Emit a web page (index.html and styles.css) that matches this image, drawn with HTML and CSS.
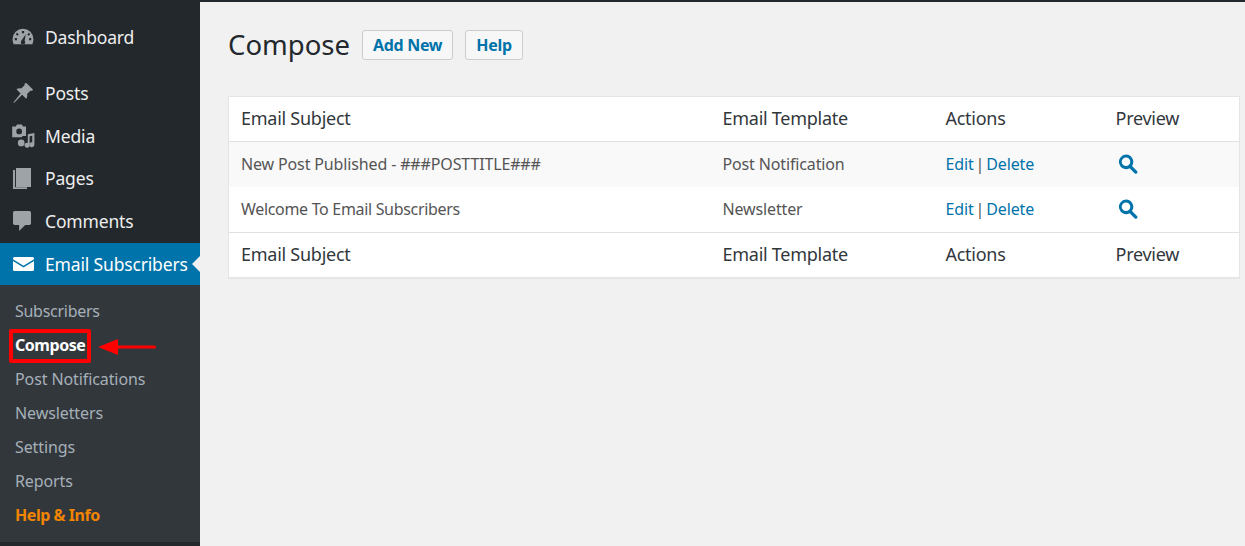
FILE: index.html
```html
<!DOCTYPE html>
<html lang="en">
<head>
<meta charset="utf-8">
<title>Compose</title>
<link rel="stylesheet" href="styles.css">
</head>
<body>
<div class="layout">
  <nav class="sidebar">
    <ul class="menu">
      <li class="item item-first"><svg class="icon" viewBox="0 0 20 20"><path d="M10 2.500a9.500 9.500 0 0 0-9.500 9.500c0 1.600.3 3 1 4.500h17c.7-1.500 1-2.900 1-4.500A9.500 9.500 0 0 0 10 2.500zM9 4.500h2v2H9zM4.600 6.200l1.500 1.500-1.200 1.200-1.500-1.500zm10.800 0l1.200 1.200-1.500 1.500-1.200-1.200zM2.500 11h2v2h-2zm13 0h2v2h-2zM12.500 7.500l-1 6a2 2 0 1 1-3 0z" fill-rule="evenodd"/></svg><span>Dashboard</span></li>
      <li class="item"><svg class="icon" viewBox="0 0 20 20"><path d="M13 1l6.200 6-1.300 1.200-1-.4-3.200 3.200c.5 1.600.1 3.200-.8 4.200L9.200 11.500 2 18.800l-.8-.1 6.600-8.300-3.700-3.700c1.100-1 2.700-1.300 4.300-.8l3.200-3.200-.4-1z"/></svg><span>Posts</span></li>
      <li class="item"><svg class="icon icon-wide" viewBox="0 0 20 20"><path d="M1 2h3l1-1.500h4L10 2h2.500v8H9.700a3 3 0 0 0-.7 1H1zm5.800 1.800a2.400 2.400 0 1 0 0 4.800 2.400 2.400 0 0 0 0-4.800zM14 8.500l5.500-1v9.700a2.100 2.100 0 1 1-1.800-2V9.800L15.500 10.300v7.400a2.100 2.100 0 1 1-1.500-2zM8.500 13a2.800 2.800 0 1 1 0 5.600 2.800 2.800 0 0 1 0-5.600z" fill-rule="evenodd"/></svg><span>Media</span></li>
      <li class="item"><svg class="icon" viewBox="0 0 20 20"><path d="M3.600 .9h13.700v17.300H3.600z"/><path d="M.9 2.700h1.800v15.700h10.900V20H.9z"/></svg><span>Pages</span></li>
      <li class="item"><svg class="icon" viewBox="0 0 20 20"><path d="M2.400 .9h13.400a1.500 1.500 0 0 1 1.500 1.500v9.700a1.500 1.500 0 0 1-1.500 1.500H12l-5.500 5.400V13.600H2.400A1.500 1.500 0 0 1 .9 12.100V2.400A1.500 1.500 0 0 1 2.400 .9z"/></svg><span>Comments</span></li>
      <li class="item item-active"><svg class="icon" viewBox="0 0 21 14"><path d="M1.500 0h18A1.500 1.500 0 0 1 21 1.500v.7L10.500 8.800 0 2.200v-.7A1.500 1.500 0 0 1 1.500 0z"/><path d="M0 4l10.500 6.600L21 4v8.500a1.500 1.500 0 0 1-1.500 1.500h-18A1.500 1.500 0 0 1 0 12.500z"/></svg><span>Email Subscribers</span></li>
    </ul>
    <ul class="submenu">
      <li class="sub-item sub-tight">Subscribers</li>
      <li class="sub-item sub-current">Compose<svg class="arrow" viewBox="0 0 58 20"><path d="M0 10L20 2v6.500h36.500a1.500 1.500 0 0 1 0 3H20V18z"/></svg></li>
      <li class="sub-item">Post Notifications</li>
      <li class="sub-item">Newsletters</li>
      <li class="sub-item">Settings</li>
      <li class="sub-item">Reports</li>
      <li class="sub-item sub-help">Help &amp; Info</li>
    </ul>
  </nav>
  <main class="content">
    <header class="page-head">
      <h1 class="title">Compose</h1>
      <a class="btn">Add New</a>
      <a class="btn">Help</a>
    </header>
    <table class="list">
      <thead>
        <tr><th class="col-subject">Email Subject</th><th class="col-template">Email Template</th><th class="col-actions">Actions</th><th>Preview</th></tr>
      </thead>
      <tbody>
        <tr class="alt"><td>New Post Published - ###POSTTITLE###</td><td>Post Notification</td><td class="actions"><a>Edit</a> | <a>Delete</a></td><td><svg class="search" viewBox="0 0 20 20"><path d="M8 .5a7.300 7.300 0 0 1 6 11.400l5 5a1.700 1.700 0 0 1-2.400 2.400l-5-5A7.300 7.300 0 1 1 8 .5zm0 3a4 4 0 1 0 0 8.600 4 4 0 0 0 0-8.600z" fill-rule="evenodd"/></svg></td></tr>
        <tr class="row-tall"><td class="td-tight">Welcome To Email Subscribers</td><td>Newsletter</td><td class="actions"><a>Edit</a> | <a>Delete</a></td><td><svg class="search" viewBox="0 0 20 20"><path d="M8 .5a7.300 7.300 0 0 1 6 11.400l5 5a1.700 1.700 0 0 1-2.400 2.400l-5-5A7.300 7.300 0 1 1 8 .5zm0 3a4 4 0 1 0 0 8.600 4 4 0 0 0 0-8.600z" fill-rule="evenodd"/></svg></td></tr>
      </tbody>
      <tfoot>
        <tr><th>Email Subject</th><th>Email Template</th><th>Actions</th><th>Preview</th></tr>
      </tfoot>
    </table>
  </main>
</div>
</body>
</html>
```
FILE: styles.css
```css
* { box-sizing: border-box; }
html, body { margin: 0; height: 100%; overflow: hidden; }
body { font-family: "Noto Sans", "Open Sans", sans-serif; background: #f1f1f1; color: #32373c; }
ul { list-style: none; margin: 0; padding: 0; }
.layout { display: flex; height: 546px; border-top: 2px solid #23282d; }
.sidebar { width: 200px; flex: none; background: #23282d; margin-top: -2px; }
.menu { padding-top: 16px; }
.item { display: flex; align-items: center; height: 42.500px; padding-left: 12px; color: #eee; font-size: 17.500px; letter-spacing: -.16px; }
.item-first { margin-bottom: 13.500px; }
.item .icon { width: 22px; height: 22px; margin-right: 11px; fill: #9ea3a8; flex: none; }
.item .icon-wide { width: 24px; height: 24px; margin-left: -1px; margin-right: 10px; }
.item-active { height: 42px; margin-top: 1px; background: #0073aa; color: #fff; position: relative; }
.item-active .icon { fill: #fff; width: 21px; height: 14px; margin-left: 1px; margin-right: 11px; }
.item-active::after { content: ""; position: absolute; right: 0; top: 13px; border: 8px solid transparent; border-right-color: #f1f1f1; border-left-width: 0; }
.submenu { background: #32373c; padding: 9px 0 10px; }
.sub-item { height: 34px; line-height: 34px; padding-left: 15px; font-size: 16px; color: #a6b0b8; letter-spacing: -.1px; position: relative; }
.sub-tight { letter-spacing: -.28px; }
.sub-current { color: #fff; font-weight: 700; letter-spacing: -.45px; }
.sub-current::before { content: ""; box-sizing: border-box; position: absolute; left: 9px; top: 1px; width: 82px; height: 34px; border: 4px solid #f00; border-radius: 2px; }
.arrow { position: absolute; left: 98px; top: 9px; width: 58px; height: 20px; fill: #f00; }
.sub-help { color: #f18500; font-weight: 700; letter-spacing: -.45px; }
.content { flex: 1; min-width: 0; padding: 0 5px 0 28px; }
.page-head { display: flex; align-items: center; height: 94px; padding-bottom: 8px; }
.title { margin: 0 12px 2px 0; font-size: 27.500px; font-weight: 400; color: #23282d; }
.btn { display: block; height: 30px; line-height: 28px; padding: 0 10px; margin-right: 12px; border: 1px solid #ccc; border-radius: 3px; background: #f7f7f7; color: #0073aa; font-size: 16px; font-weight: 700; letter-spacing: -.3px; }
.list { width: 100%; border-collapse: collapse; table-layout: fixed; background: #fff; border: 1px solid #e5e5e5; box-shadow: 0 1px 1px rgba(0,0,0,.04); }
.list th, .list td { text-align: left; padding: 0 12px; }
.list th { height: 45px; font-size: 18px; font-weight: 400; color: #32373c; letter-spacing: -.26px; }
.list thead th { padding-bottom: 2px; }
.list tfoot th { padding-bottom: 2px; }
.list td { height: 45px; font-size: 16px; color: #555; letter-spacing: -.14px; }
.list .row-tall td { height: 46px; }
.list .td-tight { letter-spacing: -.32px; }
.list .actions { word-spacing: -2px; }
.col-subject { width: 482px; }
.col-template { width: 223px; }
.col-actions { width: 170px; }
.list thead th { border-bottom: 1px solid #e1e1e1; }
.list tfoot th { border-top: 1px solid #e1e1e1; }
.alt { background: #f9f9f9; }
.list a { color: #0073aa; }
.search { display: block; width: 20px; height: 20px; margin-left: 2px; fill: #0073aa; }
```
